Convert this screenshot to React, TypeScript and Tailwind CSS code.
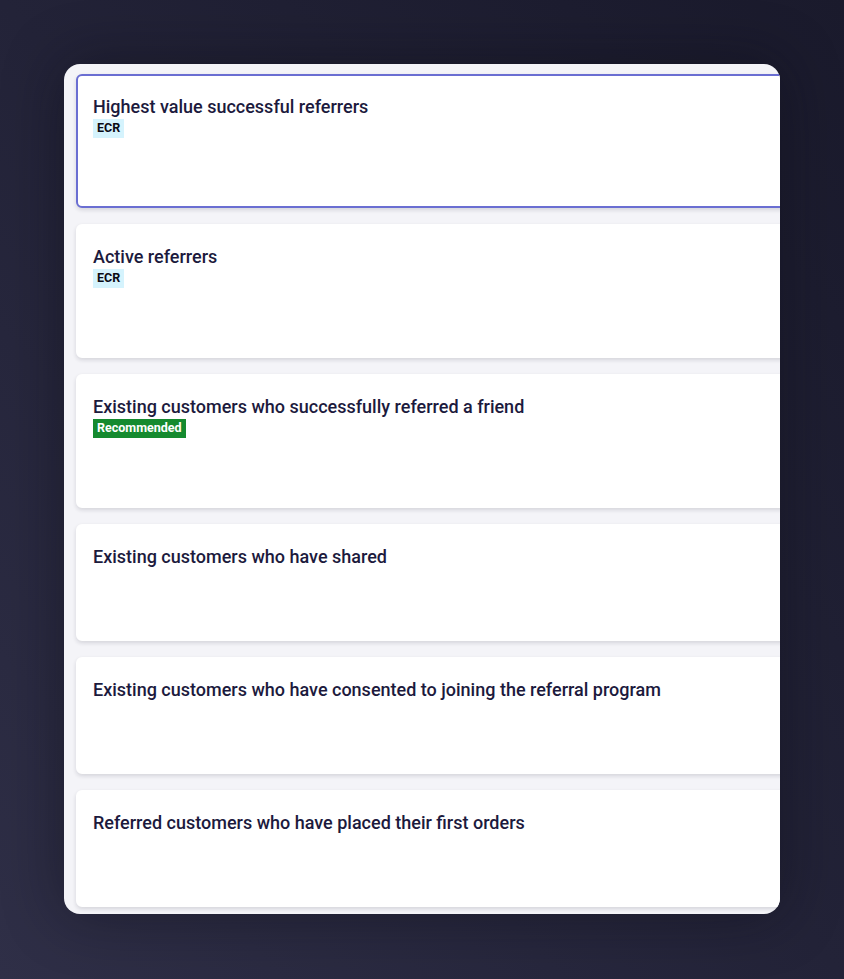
import React from "react";

type Segment = {
  id: string;
  title: string;
  badge?: "ecr" | "recommended";
};

const segments: Segment[] = [
  { id: "highest", title: "Highest value successful referrers", badge: "ecr" },
  { id: "active", title: "Active referrers", badge: "ecr" },
  { id: "referred", title: "Existing customers who successfully referred a friend", badge: "recommended" },
  { id: "shared", title: "Existing customers who have shared" },
  { id: "consented", title: "Existing customers who have consented to joining the referral program" },
  { id: "first-orders", title: "Referred customers who have placed their first orders" },
];

function Badge({ kind }: { kind: "ecr" | "recommended" }) {
  if (kind === "recommended") {
    return (
      <span className="inline-flex h-[19px] items-center bg-[#158a2f] px-[4px] text-[12.5px] font-bold leading-none text-white">
        Recommended
      </span>
    );
  }
  return (
    <span className="inline-flex h-[19px] items-center bg-[#d5f3fd] px-[4px] text-[12.5px] font-bold leading-none text-[#0b0b14]">
      ECR
    </span>
  );
}

export default function App() {
  const selected = "highest";

  return (
    <div
      className="min-h-[979px] w-full bg-gradient-to-tr from-[#2f2f47] via-[#232338] to-[#1a1a2c] pt-16 pl-16"
      style={{ fontFamily: "Roboto, 'Noto Sans', sans-serif" }}
    >
      <div className="h-[850px] w-[716px] overflow-hidden rounded-2xl bg-[#f4f4f8] pt-[10px] pl-3 shadow-[0_0_60px_rgba(10,10,20,0.45)]">
        <div className="flex w-[760px] flex-col gap-4">
          {segments.map((s) => (
            <div
              key={s.id}
              className={`min-h-[117px] rounded-md border-2 bg-white px-[15px] pt-[19px] pb-[68px] shadow-[0_2px_4px_rgba(20,20,40,0.14)] ${
                selected === s.id ? "border-[#6a6ed2]" : "border-white"
              }`}
            >
              <h3 className="text-[18px] font-medium leading-6 text-[#1c1a3d]">{s.title}</h3>
              {s.badge && (
                <div className="flex">
                  <Badge kind={s.badge} />
                </div>
              )}
            </div>
          ))}
        </div>
      </div>
    </div>
  );
}
